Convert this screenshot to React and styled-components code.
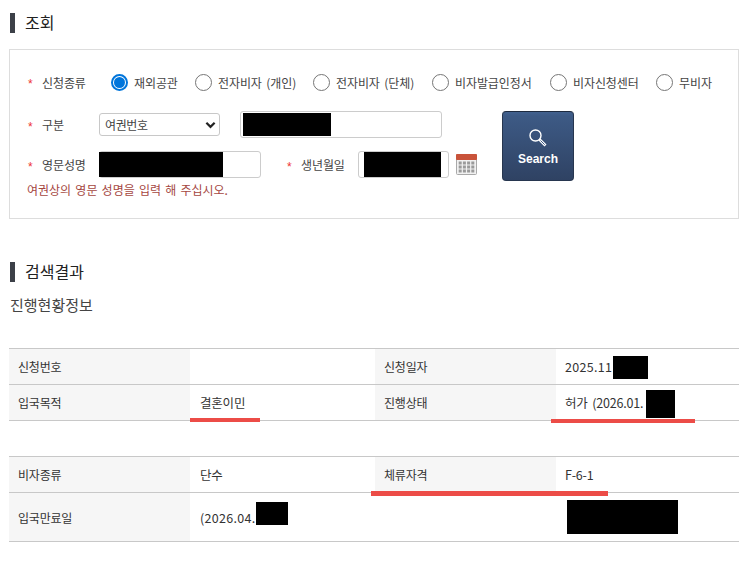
import React from 'react'
import styled, { createGlobalStyle } from 'styled-components'

const GlobalStyle = createGlobalStyle`
  html, body {
    margin: 0;
    padding: 0;
    background: #fff;
  }
  body {
    font-family: "Noto Sans CJK KR", "Noto Sans", sans-serif;
    font-size: 12px;
    color: #333;
  }
  * {
    box-sizing: border-box;
  }
`

const Page = styled.div`
  width: 750px;
  height: 585px;
  overflow: hidden;
  padding: 13px 11px 0 9px;
`

const SectionTitle = styled.h2`
  margin: ${p => p.$top || 0}px 0 0 1px;
  height: 20px;
  padding-left: 10px;
  border-left: 5px solid #3c4048;
  font-size: 16px;
  line-height: 18px;
  font-weight: 400;
  color: #222;
`

const Panel = styled.section`
  margin-top: 16px;
  height: 170px;
  border: 1px solid #ddd;
  padding: 20px 0 0 17px;
`

const RadioRow = styled.div`
  display: flex;
  align-items: center;
  height: 24px;
`

const Star = styled.span`
  width: 15px;
  flex: none;
  margin-left: ${p => p.$ml || 0}px;
  padding: 4px 0 0 1px;
  color: #ee3333;
  font-size: 12px;
  font-family: "Liberation Sans", sans-serif;
`

const Label = styled.span`
  flex: none;
  width: ${p => p.$w || 57}px;
  letter-spacing: -0.1px;
  color: #444;
`

const RadioItem = styled.label`
  display: flex;
  align-items: center;
  width: ${p => p.$w}px;
  flex: none;
  letter-spacing: -0.1px;
  word-spacing: 2px;
  color: #444;
`

const RadioDot = styled.span`
  width: 17px;
  height: 17px;
  flex: none;
  margin-right: 6px;
  border-radius: 50%;
  border: ${p => (p.$on ? '2px solid #0075db' : '1px solid #767676')};
  background: #fff;
  display: flex;
  align-items: center;
  justify-content: center;

  &::after {
    content: "";
    display: ${p => (p.$on ? 'block' : 'none')};
    width: 11px;
    height: 11px;
    border-radius: 50%;
    background: #0075db;
  }
`

const FormBody = styled.div`
  display: flex;
  margin-top: 17px;
`

const Fields = styled.div`
  width: 475px;
  flex: none;
`

const FieldRow = styled.div`
  display: flex;
  align-items: center;
  height: 27px;
  margin-bottom: ${p => p.$gap || 0}px;
`

const SelectBox = styled.div`
  width: 121px;
  height: 23px;
  border: 1px solid #c8c8c8;
  border-radius: 3px;
  display: flex;
  align-items: center;
  justify-content: space-between;
  padding: 0 3px 0 5px;
  letter-spacing: -0.4px;
  color: #444;
`

const InputBox = styled.div`
  width: ${p => p.$w}px;
  height: 27px;
  margin-left: ${p => p.$ml || 0}px;
  border: 1px solid #ccc;
  border-radius: 3px;
  padding: ${p => p.$pt ?? 0}px 0 0 ${p => p.$pl || 0}px;
  flex: none;
`

const Redact = styled.span`
  display: block;
  width: ${p => p.$w}px;
  height: ${p => p.$h}px;
  margin-left: ${p => p.$ml || 0}px;
  background: #000;
`

const CalendarIcon = styled.svg`
  width: 21px;
  height: 21px;
  margin-left: 7px;
  flex: none;
`

const Help = styled.p`
  margin: 4px 0 0 0;
  font-size: 12px;
  line-height: 16px;
  word-spacing: 1.5px;
  color: #a5473f;
`

const SearchButton = styled.button`
  width: 72px;
  height: 70px;
  padding: 16px 0 0;
  border: 1px solid #27364f;
  border-top-color: #1d2a3f;
  border-radius: 4px;
  background: linear-gradient(#41618f 0, #3d5a85 6%, #2f4263 100%);
  color: #fff;
  font-family: "Liberation Sans", sans-serif;
  font-size: 12px;
  font-weight: 700;
  display: flex;
  flex-direction: column;
  align-items: center;
  gap: 4px;
`

const SubTitle = styled.h3`
  margin: 13px 0 0 1px;
  font-size: 15px;
  line-height: 20px;
  font-weight: 400;
  color: #444;
`

const Table = styled.div`
  margin-top: ${p => p.$top}px;
  display: grid;
  grid-template-columns: 181px 185px 181px 183px;
  border-top: 1px solid #c8c8c8;
`

const Cell = styled.div`
  position: relative;
  height: ${p => p.$h || 36}px;
  border-bottom: 1px solid #c8c8c8;
  background: ${p => (p.$head ? '#f6f6f6' : '#fff')};
  padding-left: ${p => p.$pl ?? (p.$head ? 9 : 10)}px;
  display: flex;
  align-items: center;
  font-size: ${p => (p.$head ? 12 : 12.5)}px;
  letter-spacing: ${p => (p.$numeric ? '0.3px' : '-0.2px')};
  word-spacing: 2px;
  white-space: pre;
  color: #333;
`

const Marker = styled.span`
  position: absolute;
  z-index: 2;
  left: ${p => p.$left}px;
  bottom: ${p => p.$bottom}px;
  width: ${p => p.$w}px;
  height: ${p => p.$h || 4}px;
  background: #ec4c47;
`

const RedactOver = styled.span`
  position: absolute;
  z-index: 1;
  left: ${p => p.$left}px;
  top: ${p => p.$top}px;
  width: ${p => p.$w}px;
  height: ${p => p.$h}px;
  background: #000;
`

const radios = [
  { label: '재외공관', w: 84, on: true },
  { label: '전자비자 (개인)', w: 118 },
  { label: '전자비자 (단체)', w: 119 },
  { label: '비자발급인정서', w: 118 },
  { label: '비자신청센터', w: 106 },
  { label: '무비자', w: 70 },
]

const Calendar = () => (
  <CalendarIcon viewBox="0 0 21 21">
    <rect x="0.5" y="0.5" width="20" height="20" rx="1" fill="#f1f1f1" stroke="#a9a9a9" />
    <rect x="0" y="0" width="21" height="6" rx="1" fill="#c9533a" />
    {[0, 1, 2].map(r =>
      [0, 1, 2, 3].map(c => (
        <rect key={`${r}-${c}`} x={2.7 + c * 4.2} y={7.5 + r * 4} width="3" height="3" fill="#9a9a9a" />
      ))
    )}
  </CalendarIcon>
)

const SearchIcon = () => (
  <svg width="20" height="20" viewBox="0 0 20 20" fill="none" stroke="#fff">
    <circle cx="7.5" cy="7.5" r="5.5" strokeWidth="1.4" />
    <path d="M11.5 11.5l6 6" strokeWidth="2.8" />
    <path d="M12.5 12.5l4.2 4.2" strokeWidth="1" stroke="#3d5a85" />
  </svg>
)

export default function App() {
  return (
    <Page>
      <GlobalStyle />
      <SectionTitle>조회</SectionTitle>
      <Panel>
        <RadioRow>
          <Star>*</Star>
          <Label $w={69}>신청종류</Label>
          {radios.map(r => (
            <RadioItem key={r.label} $w={r.w}>
              <RadioDot $on={r.on} />
              {r.label}
            </RadioItem>
          ))}
        </RadioRow>
        <FormBody>
          <Fields>
            <FieldRow $gap={13}>
              <Star>*</Star>
              <Label>구분</Label>
              <SelectBox>
                여권번호
                <svg width="11" height="8" viewBox="0 0 12 8" fill="none" stroke="#222" strokeWidth="2.4">
                  <path d="M1.5 1.5L6 6l4.5-4.5" />
                </svg>
              </SelectBox>
              <InputBox $w={202} $ml={20} $pl={2} $pt={1}>
                <Redact $w={88} $h={23} />
              </InputBox>
            </FieldRow>
            <FieldRow>
              <Star>*</Star>
              <Label>영문성명</Label>
              <InputBox $w={162}>
                <Redact $w={124} $h={25} $ml={-1} />
              </InputBox>
              <Star $ml={25}>*</Star>
              <Label>생년월일</Label>
              <InputBox $w={91} $pl={5}>
                <Redact $w={77} $h={25} />
              </InputBox>
              <Calendar />
            </FieldRow>
            <Help>여권상의 영문 성명을 입력 해 주십시오.</Help>
          </Fields>
          <SearchButton>
            <SearchIcon />
            Search
          </SearchButton>
        </FormBody>
      </Panel>

      <SectionTitle $top={43}>검색결과</SectionTitle>
      <SubTitle>진행현황정보</SubTitle>

      <Table $top={33}>
        <Cell $head>신청번호</Cell>
        <Cell />
        <Cell $head>신청일자</Cell>
        <Cell $pl={9} $numeric>
          2025.11
          <RedactOver $left={57} $top={7} $w={35} $h={23} />
        </Cell>
        <Cell $head>입국목적</Cell>
        <Cell>
          결혼이민
          <Marker $left={0} $bottom={-2} $w={70} />
        </Cell>
        <Cell $head>진행상태</Cell>
        <Cell $pl={9}>
          허가 (2026.01.
          <RedactOver $left={90} $top={5} $w={29} $h={28} />
          <Marker $left={-5} $bottom={-3} $w={144} />
        </Cell>
      </Table>

      <Table $top={35}>
        <Cell $head>비자종류</Cell>
        <Cell>단수</Cell>
        <Cell $head>
          체류자격
          <Marker $left={-4} $bottom={-4} $w={237} $h={5} />
        </Cell>
        <Cell $pl={9}>F-6-1</Cell>
        <Cell $head $h={49}>입국만료일</Cell>
        <Cell $h={49} $numeric>
          (2026.04.
          <RedactOver $left={66} $top={9} $w={32} $h={23} />
        </Cell>
        <Cell $h={49} />
        <Cell $h={49}>
          <RedactOver $left={11} $top={7} $w={111} $h={34} />
        </Cell>
      </Table>
    </Page>
  )
}
